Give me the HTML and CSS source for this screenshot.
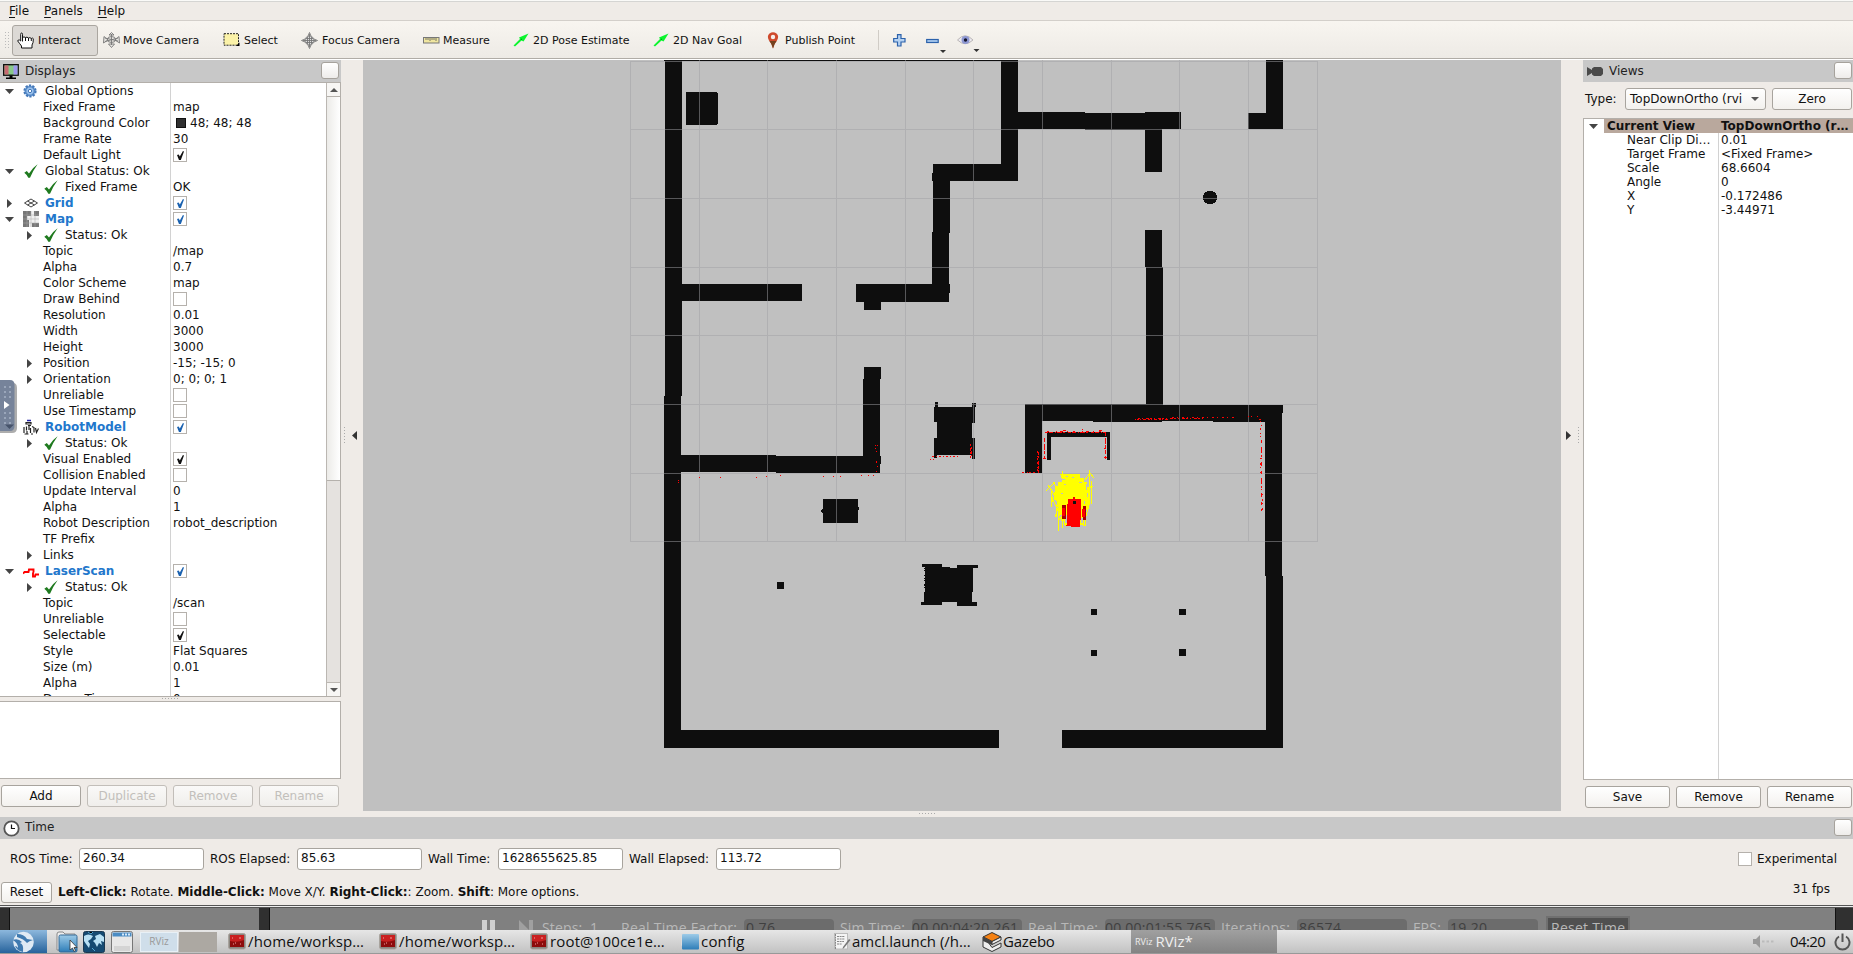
FILE: index.html
```html
<!DOCTYPE html>
<html lang="en">
<head>
<meta charset="utf-8">
<title>RViz</title>
<link rel="stylesheet" href="styles.css">
</head>
<body>
<svg class="defs" width="0" height="0">
  <defs>
    <symbol id="ok" viewBox="0 0 14 14"><path d="M.3 8.800 L2.800 7 L5 9.500 Q8 4 13.600 .200 Q9 6.500 6 13.800 L4.300 13.800 Q3 10.800 .3 8.800Z" fill="#1f7a1f"/></symbol>
    <symbol id="term" viewBox="0 0 18 18"><rect x=".5" y=".5" width="17" height="15.500" rx="2" fill="#8b8680" stroke="#a8a39d"/><rect x="2" y="2" width="14" height="12" fill="#8d0c0c"/><path d="M2 2H16V7Q9 10 2 8Z" fill="#c92020"/><path d="M4 5h1M7 10h1M12 11h1M11 5h2M5 11h1" stroke="#f5a0a0"/></symbol>
    <symbol id="dn" viewBox="0 0 9 5"><path d="M0 0H9L4.500 5Z" fill="#444"/></symbol>
    <symbol id="rt" viewBox="0 0 5 9"><path d="M0 0L5 4.500L0 9Z" fill="#444"/></symbol>
    <symbol id="arrow2d" viewBox="0 0 16 14"><path d="M.5 12.500L7 6L6 4.600L15.500 .5L10.500 8.500L8.500 7.600L2 13.500Z" fill="#0bf52e"/><path d="M7.500 6.500L9 5.500L8.700 7Z" fill="#047a18"/></symbol>
    <linearGradient id="g-blue" x2="0" y2="1"><stop stop-color="#9dcbe8"/><stop offset="1" stop-color="#2d7db8"/></linearGradient>
  </defs>
</svg>
<div class="screen">
  <nav class="menubar"><span><u>F</u>ile</span><span><u>P</u>anels</span><span><u>H</u>elp</span></nav>

  <div class="toolbar">
    <i class="grip"></i>
    <div class="tool active"><svg class="t-hand" width="17" height="17" viewBox="0 0 17 17"><path d="M5.500 9.500V2.300Q5.500 1 4.600 1T3.700 2.300V9L2.500 8Q1 7.500 .7 9Q3 12 4.500 14V16H15V13Q16.500 11 16.300 6.700Q15.500 5.500 14.300 6.500Q13 5 11.500 6Q10 4.500 8.500 5.500Q7 4.300 5.500 5.500M8.500 5.500V9M11.500 6V9M14.300 6.500V9" fill="#fff" stroke="#111"/></svg>Interact</div>
    <div class="tool w-move"><svg width="17" height="16" viewBox="0 0 17 16"><g fill="#e8e6e2" stroke="#777" stroke-width=".9"><ellipse cx="8.500" cy="7.500" rx="4" ry="3"/><path d="M1 4.500L.500 11L5 8ZM16 4.500L16.500 11L12 8ZM6 3L8.500 .5L11 3ZM5.500 12L8.500 15.500L11.500 12Z"/><path d="M2 6L15 9M2 9.500L15 6M8.500 2V13"/></g></svg>Move Camera</div>
    <div class="tool w-select"><svg width="17" height="14" viewBox="0 0 17 14"><rect x="1" y=".7" width="14.500" height="11.500" fill="#fbf2a8" stroke="#222" stroke-dasharray="2 1"/><path d="M16.500 9.500V13H13Z"/></svg>Select</div>
    <div class="tool w-focus"><svg width="17" height="17" viewBox="0 0 17 17"><g fill="none" stroke="#777" stroke-width=".9"><circle cx="8.500" cy="8.500" r="4.500" fill="#ddd"/><path d="M7 4L8.500 .5L10 4M7 13L8.500 16.500L10 13M4 7L.5 8.500L4 10M13 7L16.500 8.500L13 10M8.500 2V15M2 8.500H15M6.500 5V12M10.500 5V12M5 6.500H12M5 10.500H12"/></g></svg>Focus Camera</div>
    <div class="tool w-measure"><svg width="17" height="7" viewBox="0 0 17 7"><rect x=".5" y=".5" width="15.500" height="5.500" fill="#f0e6a0" stroke="#777"/><path d="M3 1v2M5 1v2M7 1v3M9 1v2M11 1v2M13 1v3" stroke="#555" stroke-width=".8"/></svg>Measure</div>
    <div class="tool w-pose"><svg width="16" height="14"><use href="#arrow2d"/></svg>2D Pose Estimate</div>
    <div class="tool w-nav"><svg width="16" height="14"><use href="#arrow2d"/></svg>2D Nav Goal</div>
    <div class="tool w-pub"><svg width="12" height="17" viewBox="0 0 12 17"><path d="M6 16.500Q5 12 2 8.500Q-.5 4 2.500 1.500Q6-1 9.500 1.500Q12.500 4 10 8.500Q7 12 6 16.500Z" fill="#cf4a2c"/><path d="M6 16.500Q5 12 2.500 9H9.500Q7 12 6 16.500Z" fill="#73421f"/><circle cx="6" cy="5" r="2.200" fill="#f6eeea"/></svg>Publish Point</div>
    <i class="tsep"></i>
    <svg class="plus" width="13" height="13" viewBox="0 0 13 13"><path d="M4.500 .7H8V4.500H12V8H8V12H4.500V8H.7V4.500H4.500Z" fill="#b5d2f2" stroke="#2c62ab" stroke-width="1.200"/></svg>
    <svg class="minus" width="22" height="20" viewBox="0 0 22 20"><rect x=".7" y="5.500" width="11.500" height="3" fill="#a8c9ee" stroke="#2c62ab" stroke-width="1.200"/><path d="M14 16h6l-3 3z" fill="#333"/></svg>
    <svg class="eye" width="24" height="20" viewBox="0 0 24 20"><path d="M.5 7Q8-1.500 16 7Q8 14.500 .5 7Z" fill="#eceaf0" stroke="#b9b5b5"/><circle cx="8.500" cy="7" r="4" fill="#8d97d2"/><circle cx="8.500" cy="7" r="1.700" fill="#15152a"/><path d="M16.500 16h6l-3 3z" fill="#333"/></svg>
  </div>

  <main class="work">
    <section class="displays">
      <header class="ptitle"><svg width="16" height="17" viewBox="0 0 16 17"><rect x=".7" y="1.700" width="14.500" height="10.500" fill="#88c98a" stroke="#111" stroke-width="1.400"/><rect x="1.500" y="2.500" width="4" height="9" fill="#c86a72"/><rect x="10.500" y="2.500" width="4" height="9" fill="#9d97ee"/><path d="M6.500 12.500h3v2h3.500v1.500H3V14.500h3.500z"/></svg><span>Displays</span><i class="close"></i></header>
      <div class="treebox">
        <div class="tree">
          <div class="row"><div class="nm top"><svg class="a d"><use href="#dn"/></svg><svg class="ic" viewBox="0 0 16 16"><circle cx="7" cy="8" r="5.600" fill="#82b2e6" stroke="#4377b8" stroke-width="2" stroke-dasharray="2.200 1.320"/><circle cx="7" cy="8" r="4.200" fill="#9cc4ef" stroke="#4377b8"/><circle cx="7" cy="8" r="1.700" fill="#fff" stroke="#4377b8"/></svg>Global Options</div><div class="vl"></div></div>
          <div class="row"><div class="nm sub">Fixed Frame</div><div class="vl">map</div></div>
          <div class="row"><div class="nm sub">Background Color</div><div class="vl"><i class="swatch"></i>48; 48; 48</div></div>
          <div class="row"><div class="nm sub">Frame Rate</div><div class="vl">30</div></div>
          <div class="row"><div class="nm sub">Default Light</div><div class="vl"><i class="cb on"></i></div></div>
          <div class="row"><div class="nm top"><svg class="a d"><use href="#dn"/></svg><svg class="ic ck"><use href="#ok"/></svg>Global Status: Ok</div><div class="vl"></div></div>
          <div class="row"><div class="nm stat"><svg class="ck"><use href="#ok"/></svg>Fixed Frame</div><div class="vl">OK</div></div>
          <div class="row"><div class="nm top b"><svg class="a r"><use href="#rt"/></svg><svg class="ic" viewBox="0 0 16 16"><path d="M1.500 8L8 4L14.500 8L8 12ZM4.500 6L11.500 10M11.500 6L4.500 10" fill="none" stroke="#444"/></svg>Grid</div><div class="vl"><i class="cb on blue"></i></div></div>
          <div class="row"><div class="nm top b"><svg class="a d"><use href="#dn"/></svg><svg class="ic" viewBox="0 0 16 16"><path d="M0 0h16v16H0z" fill="#f0f0f0"/><path d="M0 0h8v5H4v4H6v7H0zM11 0h5v5h-5zM9 12h7v4H9z" fill="#777"/><path d="M0 4h16M0 8h16M0 12h16M4 0v16M8 0v16M12 0v16" stroke="#aaa" stroke-width=".5"/></svg>Map</div><div class="vl"><i class="cb on blue"></i></div></div>
          <div class="row"><div class="nm stat"><svg class="a r"><use href="#rt"/></svg><svg class="ck"><use href="#ok"/></svg>Status: Ok</div><div class="vl"></div></div>
          <div class="row"><div class="nm sub">Topic</div><div class="vl">/map</div></div>
          <div class="row"><div class="nm sub">Alpha</div><div class="vl">0.7</div></div>
          <div class="row"><div class="nm sub">Color Scheme</div><div class="vl">map</div></div>
          <div class="row"><div class="nm sub">Draw Behind</div><div class="vl"><i class="cb"></i></div></div>
          <div class="row"><div class="nm sub">Resolution</div><div class="vl">0.01</div></div>
          <div class="row"><div class="nm sub">Width</div><div class="vl">3000</div></div>
          <div class="row"><div class="nm sub">Height</div><div class="vl">3000</div></div>
          <div class="row"><div class="nm sub exp"><svg class="a r"><use href="#rt"/></svg>Position</div><div class="vl">-15; -15; 0</div></div>
          <div class="row"><div class="nm sub exp"><svg class="a r"><use href="#rt"/></svg>Orientation</div><div class="vl">0; 0; 0; 1</div></div>
          <div class="row"><div class="nm sub">Unreliable</div><div class="vl"><i class="cb"></i></div></div>
          <div class="row"><div class="nm sub">Use Timestamp</div><div class="vl"><i class="cb"></i></div></div>
          <div class="row"><div class="nm top b"><svg class="a d"><use href="#dn"/></svg><svg class="ic" viewBox="0 0 16 16"><path d="M4 1.500h4" stroke="#22a" stroke-width="1.500"/><path d="M3 3.500h5v1.500H3zM1 8v6M3.500 7.500v4M5 6.500h3M6 7v4M4 12v3M7.500 9v5M9 7.500l2 1v5M12.500 9l1 4.500l2-4M1.500 15h4M8 15h2" fill="none" stroke="#222" stroke-width="1.200"/></svg>RobotModel</div><div class="vl"><i class="cb on blue"></i></div></div>
          <div class="row"><div class="nm stat"><svg class="a r"><use href="#rt"/></svg><svg class="ck"><use href="#ok"/></svg>Status: Ok</div><div class="vl"></div></div>
          <div class="row"><div class="nm sub">Visual Enabled</div><div class="vl"><i class="cb on"></i></div></div>
          <div class="row"><div class="nm sub">Collision Enabled</div><div class="vl"><i class="cb"></i></div></div>
          <div class="row"><div class="nm sub">Update Interval</div><div class="vl">0</div></div>
          <div class="row"><div class="nm sub">Alpha</div><div class="vl">1</div></div>
          <div class="row"><div class="nm sub">Robot Description</div><div class="vl">robot_description</div></div>
          <div class="row"><div class="nm sub">TF Prefix</div><div class="vl"></div></div>
          <div class="row"><div class="nm sub exp"><svg class="a r"><use href="#rt"/></svg>Links</div><div class="vl"></div></div>
          <div class="row"><div class="nm top b"><svg class="a d"><use href="#dn"/></svg><svg class="ic" viewBox="0 0 16 16"><path d="M0 10.500L1.500 9H5.500L6 6.500H10.500V9.500M10 9.500V13.500H12L12.500 11.500H16" fill="none" stroke="#f00" stroke-width="1.900"/></svg>LaserScan</div><div class="vl"><i class="cb on blue"></i></div></div>
          <div class="row"><div class="nm stat"><svg class="a r"><use href="#rt"/></svg><svg class="ck"><use href="#ok"/></svg>Status: Ok</div><div class="vl"></div></div>
          <div class="row"><div class="nm sub">Topic</div><div class="vl">/scan</div></div>
          <div class="row"><div class="nm sub">Unreliable</div><div class="vl"><i class="cb"></i></div></div>
          <div class="row"><div class="nm sub">Selectable</div><div class="vl"><i class="cb on"></i></div></div>
          <div class="row"><div class="nm sub">Style</div><div class="vl">Flat Squares</div></div>
          <div class="row"><div class="nm sub">Size (m)</div><div class="vl">0.01</div></div>
          <div class="row"><div class="nm sub">Alpha</div><div class="vl">1</div></div>
          <div class="row"><div class="nm sub">Decay Time</div><div class="vl">0</div></div>
        </div>
        <div class="scroll"><div class="sbtn"><svg width="8" height="4" viewBox="0 0 8 4"><path d="M0 4H8L4 0Z" fill="#555"/></svg></div><div class="thumb"></div><div class="track"></div><div class="sbtn"><svg width="8" height="4" viewBox="0 0 8 4"><path d="M0 0H8L4 4Z" fill="#555"/></svg></div></div>
      </div>
      <div class="hsplit"><i></i></div>
      <div class="desc"></div>
      <div class="btns"><div class="btn">Add</div><div class="btn off">Duplicate</div><div class="btn off">Remove</div><div class="btn off">Rename</div></div>
    </section>

    <div class="vsplit left"><i></i><svg width="5" height="9" viewBox="0 0 5 9"><path d="M5 0V9L0 4.500Z" fill="#333"/></svg></div>

    <svg class="map" width="1198" height="751" viewBox="363 60 1198 751" shape-rendering="crispEdges">
      <g fill="#0e0e0e">
        <path d="M664 60H1018V61H664Z"/>
        <path d="M665 60H682V284H802V301H682V396H681V455H776V456H863V379H864V367H881V379H880V456H881V464H880V473H776V472H681V730H999V748H664V396H665Z"/>
        <path d="M686 92H717V93H718V124H717V125H686Z"/>
        <path d="M1001 60H1018V112H1085V113H1145V112H1181V129H1162V172H1145V130H1085V129H1018V181H950V233H949V284H950V293H949V302H881V310H864V302H856V284H932V232H933V181H932V173H933V164H1001Z"/>
        <path d="M1266 60H1283V129H1248V113H1266Z"/>
        <path d="M1145 230H1162V267H1163V405H1283V413H1282V576H1283V748H1062V730H1266V576H1265V422H1213V421H1162V422H1093V421H1042V473H1025V404H1146V267H1145Z"/>
        <path d="M1047 432H1110V460H1107V437H1051V460H1047Z"/>
        <path d="M935 402H938V407H972V403H976V407H975V423H972V438H975V459H972V455H937V458H934V438H937V422H934V407H935Z"/>
        <path d="M823 499H858V507H859V510H858V523H823V513H822V512H821V510H822V509H823Z"/>
        <path d="M922 564H942V567H950V568H957V565H978V568H973V592H972V602H977V606H957V602H942V605H921V602H924V592H925V567H922Z"/>
        <path d="M777 582h7v7h-7zM1091 609h6v6h-6zM1179 609h7v6h-7zM1091 650h6v6h-6zM1179 649h7v7h-7z"/>
        <circle cx="1210" cy="197.500" r="7"/>
        <path d="M924 568h1v1h-1zM924 570h1v1h-1zM924 575h1v1h-1zM924 578h1v1h-1zM924 580h1v1h-1zM924 584h1v2h-1zM924 587h1v1h-1z"/>
      </g>
      <path stroke="#a0a0a4" stroke-opacity=".5" fill="none" d="M630.500 61V542M699.500 60V542M767.500 60V542M836.500 60V542M905.500 60V542M973.500 60V542M1042.500 60V542M1111.500 60V542M1179.500 60V542M1248.500 60V542M1317.500 61V542M630 61.500H1318M630 129.500H1318M630 198.500H1318M630 267.500H1318M630 335.500H1318M630 404.500H1318M630 473.500H1318M630 541.500H1318"/>
      <g fill="none" stroke="#f00">
        <path stroke-dasharray="3 1 4 2 1 1 5 1 2 3" d="M1045 432.500H1106"/><path stroke-dasharray="2 7 1 3 3 4 1 5" d="M1047 431.500H1104"/><path d="M1082 429.500h1M1063 430.500h3M1099 430.500h3"/>
        <path stroke-dasharray="4 2 6 1 3 2" d="M1044.500 438V459M1105.500 432V459"/><path d="M1043 458.500h3M1104 457.500h3M1104 448.500h2"/>
        <path stroke-dasharray="3 1 2 3 4 1" d="M1038.500 452V473"/><path stroke-dasharray="2 3 1 1 2 2" d="M1037.500 451V473M1022 472.500H1040"/>
        <path stroke-dasharray="2 1 1 2 3 2" d="M1137 419.500H1170"/><path stroke-dasharray="2 2 1 3 3 1" d="M1138 418.500H1205"/><path stroke-dasharray="2 3 1 4" d="M1172 417.500H1237"/><path d="M1135 419.500h1M1248 416.500h1M1251 416.500h1M1257 416.500h1M1259 419.500h2M1260 421.500h1M1261 425.500h1"/>
        <path stroke-dasharray="2 3 1 2 1 30" d="M1260.500 428V462"/><path stroke-dasharray="3 4 6 2 2 1 1 3 4 5" d="M1261.500 440V511"/><path stroke-dasharray="1 4 2 2" d="M1262.500 494V512M1260.500 458V473"/>
        <path stroke-dasharray="2 2 1 2" d="M932 456.500H960"/><path d="M930 459.500h1M933 459.500h1"/><path stroke-dasharray="2 2 3 1" d="M970.500 444V458M971.500 447V456"/>
        <path d="M823 476.500h1M833 476.500h1M840 476.500h1M861 475.500h1M868 475.500h1M873 475.500h1M875 445.500h1M877 445.500h1M875 448.500h1M876 451.500h1M876 461.500h1M876 462.500h1M877 466.500h1M876 471.500h1M678 480.500h1M678 482.500h1M699 477.500h1M720 477.500h1M756 477.500h1M766 476.500h1M780 475.500h1"/>
      </g>
      <path fill="#ff0" d="M1061 474H1080V478H1084V482H1087V487H1090V505H1088V510H1086V520H1084V525H1064V521H1061V516H1058V507H1056V500H1054V492H1055V486H1058V482H1062Z"/>
      <path fill="none" stroke="#ff0" d="M1046 491L1055 482M1048 485L1056 498M1051 489V507L1053 497M1053 482L1062 496M1062 471V482M1060 474L1067 480M1089.500 470V499M1085 480L1090 473L1094 478M1083 490L1093 486M1091 481V504M1090 502L1085 519M1059 505L1055 517M1056 495V517M1058.500 510V531M1062 515V528M1059 520L1063 514M1083 516V525H1085V510M1069 522L1065 526M1053 500L1057 508"/>
      <path fill="none" stroke="#c0c0c0" d="M1066 476h2M1072 477h2M1079 482h3M1064 484h2M1061 493h2M1060 515h2M1084 501v3M1062 479h3M1086 484v6M1087 493v4M1056 501v4"/>
      <path fill="#c0c0c0" d="M1065 515h2v8h-2zM1081 518h2v5h-2z"/>
      <path fill="#f00" d="M1068 499H1073V497H1075V499H1081V520H1080V527H1071V526H1066V525H1067V504H1068Z"/>
      <path fill="#a80000" d="M1062 505h4v14h-4zM1083 506h3v14h-3z"/><path fill="#f00" d="M1062 508h3v8h-3zM1082 509h3v8h-3z"/><path fill="#111" d="M1073 501h3v3h-3z"/>
    </svg>

    <div class="vsplit right"><svg width="5" height="9" viewBox="0 0 5 9"><path d="M0 0V9L5 4.500Z" fill="#333"/></svg><i></i></div>

    <section class="views">
      <header class="ptitle"><svg width="16" height="9" viewBox="0 0 16 9"><path d="M0 0L5 3V1.500L7 0H14L16 2V7L14 9H7L5 7.500V6L0 9Z" fill="#4a4a4a"/></svg><span>Views</span><i class="close"></i></header>
      <div class="vtype"><span>Type:</span><div class="btn combo"><span>TopDownOrtho (rvi</span><svg width="8" height="4" viewBox="0 0 8 4"><path d="M0 0H8L4 4Z" fill="#555"/></svg></div><div class="btn zero">Zero</div></div>
      <div class="vtree">
        <div class="vr cur"><div><svg class="a"><use href="#dn"/></svg><b>Current View</b></div><div class="hl"><b>TopDownOrtho (r…</b></div></div>
        <div class="vr"><div>Near Clip Di…</div><div>0.01</div></div>
        <div class="vr"><div>Target Frame</div><div>&lt;Fixed Frame&gt;</div></div>
        <div class="vr"><div>Scale</div><div>68.6604</div></div>
        <div class="vr"><div>Angle</div><div>0</div></div>
        <div class="vr"><div>X</div><div>-0.172486</div></div>
        <div class="vr"><div>Y</div><div>-3.44971</div></div>
      </div>
      <div class="btns"><div class="btn">Save</div><div class="btn">Remove</div><div class="btn">Rename</div></div>
    </section>
  </main>

  <div class="msplit"><i></i></div>
  <header class="ptitle time"><svg width="17" height="17" viewBox="0 0 17 17"><circle cx="8.500" cy="8.500" r="7.200" fill="#fff" stroke="#555" stroke-width="1.800"/><path d="M8.500 4.500V8.500H12" fill="none" stroke="#111" stroke-width="1.200"/></svg><span>Time</span><i class="close"></i></header>
  <div class="times">
    <label class="l1">ROS Time:</label><div class="inp">260.34</div>
    <label class="l2">ROS Elapsed:</label><div class="inp">85.63</div>
    <label class="l3">Wall Time:</label><div class="inp">1628655625.85</div>
    <label class="l4">Wall Elapsed:</label><div class="inp">113.72</div>
    <div class="exper"><i class="cb"></i>Experimental</div>
  </div>
  <footer class="status"><div class="btn">Reset</div><p><b>Left-Click:</b> Rotate. <b>Middle-Click:</b> Move X/Y. <b>Right-Click:</b>: Zoom. <b>Shift</b>: More options.</p><span class="fps">31 fps</span></footer>
  <div class="edge"></div>

  <svg class="behind" width="1853" height="22" viewBox="0 908 1853 22">
    <rect y="908" width="1853" height="22" fill="#808080"/>
    <path d="M0 908H9V930H0ZM259 908H269V930H259ZM1836 908H1853V930H1836Z" fill="#303030"/><path d="M9.500 908V930M269.500 908V930M1835.500 908V930" stroke="#111"/>
    <path d="M482 920h5v10h-5zM490 920h5v10h-5z" fill="#d0d0d0"/><path d="M519 920L529 930H519zM529 920h4v10h-4z" fill="#a0a0a0"/>
    <g fill="#6c6c6c"><rect x="744" y="919" width="90" height="20" rx="4"/><rect x="912" y="919" width="110" height="20" rx="4"/><rect x="1105" y="919" width="110" height="20" rx="4"/><rect x="1297" y="919" width="110" height="20" rx="4"/><rect x="1448" y="919" width="90" height="20" rx="4"/></g>
    <rect x="1547" y="917" width="82" height="20" fill="#505050" stroke="#707070" stroke-width="2"/>
    <g class="gz">
      <text x="542" y="933" textLength="56">Steps:&#160; 1</text><text x="621" y="933" textLength="116">Real Time Factor:</text><text x="840" y="933" textLength="65">Sim Time:</text><text x="1028" y="933" textLength="70">Real Time:</text><text x="1221" y="933" textLength="69">Iterations:</text><text x="1413" y="933" textLength="28">FPS:</text><text x="1551" y="933" textLength="74">Reset Time</text>
    </g>
    <g class="gz dark">
      <text x="746" y="933" textLength="29">0.76</text><text x="912" y="933" textLength="106">00 00:04:20.261</text><text x="1105" y="933" textLength="106">00 00:01:55.765</text><text x="1299" y="933" textLength="42">86574</text><text x="1450" y="933" textLength="37">19.20</text>
    </g>
  </svg>

  <div class="taskbar">
    <div class="start"><svg width="23" height="22" viewBox="0 0 23 22"><circle cx="11.500" cy="11" r="10.300" fill="#dfeaf4"/><path d="M1 9Q6 7 10 11L8 12Q12 13 11 21Q5 20 3 15Q5 15 6 17Q6 12 1 9ZM5 3Q12 3 15 8L21 9Q17 10 15 12Q12 8 5 6Z" fill="#3f7ab0"/></svg></div>
    <svg class="q1" width="22" height="22" viewBox="0 0 22 22"><path d="M1 3Q1 1 3 1H7L9 3H19V19H1Z" fill="#eee" stroke="#888"/><rect x="3" y="4" width="18" height="17" rx="1.500" fill="url(#g-blue)" stroke="#356a96"/><path d="M14 9V19L16.500 17L18 20.500L19.500 19.500L18 16.500H21Z" fill="#fff" stroke="#333" stroke-width=".8"/></svg>
    <svg class="q2" width="22" height="22" viewBox="0 0 22 22"><rect x=".5" y=".5" width="21" height="21" rx="2" fill="#154a72" stroke="#1c3850"/><path d="M1 5Q5 2 10 5L8 8L5 10L7 13L6 17L3 13L1 10ZM12 5L17 3L21 6V11L18 10L19 14L16 12L14 16L12 12L10 10L13 8Z" fill="#b8e0f4"/><path d="M5 1L8 3L10 1M9 17L12 20" stroke="#55a8d4"/></svg>
    <svg class="q3" width="22" height="22" viewBox="0 0 22 22"><rect x=".5" y=".5" width="21" height="21" rx="2" fill="#e8e8e8" stroke="#777"/><rect x="1.500" y="1.500" width="19" height="4" fill="#4b8cc4"/><path d="M11 3.500h2M14 3.500h2M17 3.500h2" stroke="#d8eafa" stroke-width="2"/><rect x="3" y="15" width="16" height="5" fill="#d4d4d4"/></svg>
    <div class="pager"><span>RViz</span></div><div class="pager two"></div>
    <div class="task k1"><svg width="18" height="18"><use href="#term"/></svg><span>/home/worksp…</span></div>
    <div class="task k2"><svg width="18" height="18"><use href="#term"/></svg><span>/home/worksp…</span></div>
    <div class="task k3"><svg width="18" height="18"><use href="#term"/></svg><span>root@100ce1e…</span></div>
    <div class="task k4"><svg width="18" height="17" viewBox="0 0 18 17"><rect y=".5" width="5" height="12" fill="#ddd"/><rect x="1" y="1" width="17" height="15.500" rx="1" fill="url(#g-blue)"/></svg><span>config</span></div>
    <div class="task k5"><svg width="17" height="17" viewBox="0 0 17 17"><rect x=".5" y=".5" width="13" height="15.500" fill="#f4f4f4" stroke="#bbb"/><path d="M3 3.500h8M3 6h8M3 8.500h7M3 11h5M1.500 1v15" stroke="#888" stroke-dasharray="2 .6"/><path d="M16.500 7L10 15L8.500 16L9 14L15 6Z" fill="#777"/></svg><span>amcl.launch (/h…</span></div>
    <div class="task k6"><svg width="20" height="20" viewBox="0 0 20 20"><path d="M10 .5L19 5L10 9.500L1 5Z" fill="#f58113" stroke="#333"/><path d="M1 5V15L10 19.500L19 15V11L10 15.500L6 10L10 9.500ZM10 9.500L19 5V8L10 12.500Z" fill="#eee" stroke="#333"/><path d="M1 5L10 9.500V13L1 9Z" fill="#444"/></svg><span>Gazebo</span></div>
    <div class="task k7"><small>RViz</small><span>RViz*</span></div>
    <svg class="spk" width="21" height="13" viewBox="0 0 21 13"><path d="M0 4H3L7 0V13L3 9H0Z" fill="#999"/><path d="M9 6.500h2.500M13.500 6.500H16M18 6.500h2.500" stroke="#bbb" stroke-width="2"/></svg>
    <span class="clock">04:20</span>
    <svg class="pow" width="17" height="18" viewBox="0 0 17 18"><path d="M5 3.500A7 7 0 1 0 12 3.500M8.500 .5V9" fill="none" stroke="#555" stroke-width="2"/></svg>
  </div>

  <div class="handle"><svg width="17" height="54" viewBox="0 0 17 54"><path d="M2 3H13Q17 3 17 8V48Q17 53 12 53H0V3Z" fill="#999" opacity=".8"/><path d="M0 0H10Q14.500 0 14.500 5V46Q14.500 51 10 51H0Z" fill="#76839a"/><path d="M4 7h2M9 7h2M4 12h2M9 12h2M4 17h2M9 17h2M4 33h2M9 33h2M4 38h2M9 38h2M4 43h2M9 43h2" stroke="#9aa6ba" stroke-width="2"/><path d="M4 21L9.500 25L4 29Z" fill="#fff"/><path d="M5 44.500H14L9.500 49Z" fill="#46536a"/></svg></div>
</div>
</body>
</html>
```
FILE: styles.css
```css
* { box-sizing: border-box; }
body { margin: 0; background: #efebe7; font: 12px "DejaVu Sans", sans-serif; color: #111; overflow: hidden; }
.defs { position: absolute; }
i { display: block; font-style: normal; }
svg { flex: none; display: block; }
.screen { position: relative; width: 1853px; height: 954px; overflow: hidden; display: flex; flex-direction: column; background: #efebe7; white-space: nowrap; }

.menubar { height: 21px; flex: none; display: flex; gap: 15px; padding: 2px 0 0 9px; line-height: 18px; border-bottom: 1px solid #d3cfca; box-shadow: inset 0 1px #fafaf8, inset 0 2px #d5d5d3; }
.menubar u { text-underline-offset: 2px; }
.toolbar { height: 39px; flex: none; display: flex; align-items: center; background: linear-gradient(#f8f5f0, #edeae5); border-bottom: 1px solid #fff; box-shadow: inset 0 -1px #b0aca6; font-size: 11px; }
.grip { width: 5px; height: 18px; margin: 0 3px 0 4px; background: radial-gradient(circle, #bbb 30%, transparent 40%) 0 0 / 3px 3px; }
.tool { display: flex; align-items: center; gap: 4px; height: 31px; }
.tool.active { width: 86px; padding-left: 4px; margin-right: 5px; background: #dcd9d5; border: 1px solid #aaa6a0; border-radius: 3px; }
.w-move { width: 120px; gap: 3px; }
.w-select { width: 78px; }
.w-focus { width: 122px; }
.w-measure { width: 90px; gap: 3px; }
.w-pose { width: 140px; }
.w-nav { width: 114px; }
.w-pub { width: 111px; gap: 6px; }
.tsep { width: 1px; height: 20px; background: #d0ccc6; margin-right: 14px; }
.plus { margin-right: 20px; }
.minus { margin: 7px 9px 0 0; }
.eye { margin-top: 6px; }

.work { height: 751px; flex: none; display: flex; }
.displays { width: 341px; display: flex; flex-direction: column; }
.ptitle { height: 22px; flex: none; display: flex; align-items: center; gap: 6px; padding: 0 2px 0 3px; background: #c8c8c8; color: #222; }
.ptitle span { margin-top: -1px; }
.close { width: 18px; height: 17px; margin-left: auto; margin-top: -1px; background: linear-gradient(#fff, #eeecea); border: 1px solid #a6a29c; border-radius: 3px; }
.treebox { height: 615px; display: flex; background: #fff; border: solid #b3afaa; border-width: 1px 1px 1px 0; }
.tree { width: 326px; overflow: hidden; }
.row { height: 16px; display: flex; line-height: 16px; }
.nm { width: 171px; flex: none; display: flex; align-items: center; border-right: 1px solid #d2d2d2; }
.vl { display: flex; align-items: center; padding-left: 2px; }
.nm.top { padding-left: 5px; }
.a.d { width: 9px; height: 5px; margin-right: 9px; }
.top .a.r { width: 5px; height: 9px; margin: 0 11px 0 2px; }
.ic { width: 16px; height: 16px; margin-right: 6px; }
.ic.ck { width: 14px; height: 14px; margin-right: 7px; margin-left: 1px; }
.nm.sub { padding-left: 43px; }
.nm.exp { padding-left: 27px; }
.exp .a.r { width: 5px; height: 9px; margin-right: 11px; }
.nm.stat { padding-left: 44px; }
.stat .a.r { width: 5px; height: 9px; margin: 0 12px 0 -17px; }
.stat .ck { width: 14px; height: 14px; margin-right: 7px; }
.b { font-weight: bold; color: #2277cc; }
.swatch { width: 10px; height: 10px; margin: 0 4px 0 3px; background: #303030; border: 1px solid #111; }
.cb { width: 14px; height: 14px; background: #fff; border: 1px solid #b5b1ac; position: relative; }
.cb.on::after { content: ""; position: absolute; left: 3px; top: 2px; width: 7px; height: 9px; background: #111; clip-path: polygon(0 45%, 25% 38%, 40% 60%, 85% 0, 100% 5%, 55% 100%, 28% 100%); }
.cb.blue::after { background: #1b62b0; }
.scroll { width: 14px; border-left: 1px solid #bbb7b2; display: flex; flex-direction: column; }
.sbtn { height: 13px; display: flex; align-items: center; justify-content: center; background: #f7f6f4; }
.thumb { height: 385px; border: solid #b5b1ac; border-width: 1px 0; background: linear-gradient(90deg, #ecebe8, #fff); }
.track { flex: 1; background: #e5e2df; border-bottom: 1px solid #bbb7b2; }
.hsplit { height: 4px; display: flex; justify-content: center; padding-top: 1px; }
.hsplit i, .msplit i { width: 17px; height: 1px; background: repeating-linear-gradient(90deg, #aaa 0 1px, transparent 1px 3px); }
.desc { height: 78px; background: #fff; border: 1px solid #b3afaa; border-left: 0; }
.btns { display: flex; gap: 6px; padding: 6px 1px 0; }
.displays .btns { padding-right: 2px; }
.btn { height: 22px; flex: 1; display: flex; align-items: center; justify-content: center; background: linear-gradient(#fff, #f3f1ee); border: 1px solid #a8a49e; border-radius: 3px; padding-bottom: 1px; }
.btn.off { color: #c2bfbb; border-color: #c2beb9; background: linear-gradient(#faf9f8, #f0eeeb); }
.vsplit { width: 22px; display: flex; align-items: center; gap: 7px; }
.vsplit i { width: 1px; height: 17px; background: repeating-linear-gradient(#aaa 0 1px, transparent 1px 3px); }
.vsplit.left { padding-left: 3px; }
.vsplit.right { padding-left: 5px; }
.map { background: #c0c0c0; }

.views { width: 270px; display: flex; flex-direction: column; }
.views .ptitle { padding: 0 1px 0 4px; }
.vtype { height: 36px; display: flex; align-items: center; padding: 0 1px 2px 2px; }
.vtype > span { width: 40px; }
.combo { flex: none; width: 141px; justify-content: space-between; padding: 0 6px 1px 4px; margin-right: 6px; }
.vtree { height: 662px; background: linear-gradient(#d2d2d2, #d2d2d2) 134px 0 / 1px 100% no-repeat #fff; border: 1px solid #b3afaa; border-width: 1px 0 1px 1px; }
.vr { display: flex; height: 14px; line-height: 14px; }
.vr > div:first-child { width: 137px; padding-left: 43px; }
.vr.cur > div:first-child { display: flex; align-items: center; padding-left: 5px; }
.vr.cur b { line-height: 14px; }
.vr .a { width: 9px; height: 5px; margin-right: 6px; }
.vr.cur > div:first-child b { flex: 1; background: #b9a89d; padding-left: 3px; }
.vr .hl { flex: 1; background: #b9a89d; }
.views .btns { padding: 6px 1px 0 2px; }

.msplit { height: 6px; flex: none; padding: 2px 0 0 919px; }
.time { padding: 0 1px 0 3px; gap: 5px; }
.time span { margin-top: -2px; }
.times { height: 43px; flex: none; display: flex; align-items: center; padding-left: 10px; padding-bottom: 4px; }
.times .l1 { width: 69px; }
.times .l2 { width: 87px; }
.times .l3 { width: 70px; }
.times .l4 { width: 87px; }
.inp { width: 125px; height: 22px; margin-right: 6px; padding-left: 3px; line-height: 19px; background: #fff; border: 1px solid #a8a49e; border-radius: 3px; }
.exper { margin-left: auto; margin-right: 16px; display: flex; align-items: center; gap: 5px; }
.status { height: 23px; flex: none; display: flex; align-items: center; padding: 0 0 3px 1px; }
.status .btn { flex: none; width: 51px; height: 21px; padding: 0; }
.status p { margin: -1px 0 0 6px; }
.fps { margin: -7px 23px 0 auto; }
.edge { height: 3px; flex: none; background: #eee; border: solid #555; border-width: 1px 0; }
.behind { overflow: hidden; }
.gz { font: 14px "Open Sans", sans-serif; fill: #b8b8b8; }
.gz.dark { fill: #404040; }

.taskbar { height: 24px; flex: none; display: flex; align-items: center; background: linear-gradient(#e6e6e6, #c2c2c2); border-bottom: 1px solid #999; font: 15px "Open Sans", sans-serif; color: #111; overflow: hidden; }
.start { width: 47px; height: 24px; display: flex; align-items: center; justify-content: center; background: linear-gradient(#8db8dd, #225f99); margin-right: 9px; }
.q1, .q2 { margin-right: 5px; }
.q2 { margin-right: 6px; }
.q3 { margin-right: 7px; }
.pager { width: 38px; height: 20px; background: #cfdeea; border: 1px solid #e8f0f6; color: #999; font-size: 10px; line-height: 17px; text-align: center; }
.pager.two { background: #aca8a2; border: 0; margin-right: 11px; margin-left: 1px; }
.task { display: flex; align-items: center; gap: 2px; height: 24px; }
.task span { line-height: 22px; margin-top: -1px; }
.k1, .k2, .k3 { width: 151px; letter-spacing: .15px; }
.k4 { width: 153px; letter-spacing: .2px; }
.k5 { width: 148px; gap: 1px; }
.k6 { width: 149px; gap: 1px; letter-spacing: -.2px; }
.k7 { width: 146px; padding-left: 4px; gap: 3px; background: linear-gradient(#a0a0a0, #828282); color: #eee; }
.k7 small { font-size: 9px; }
.spk { margin-left: auto; margin-right: 16px; }
.clock { width: 37px; margin: -2px 7px 0 0; letter-spacing: -.6px; font-weight: 500; }
.pow { margin-right: 2px; }
.handle { position: absolute; left: 0; top: 380px; }
```
